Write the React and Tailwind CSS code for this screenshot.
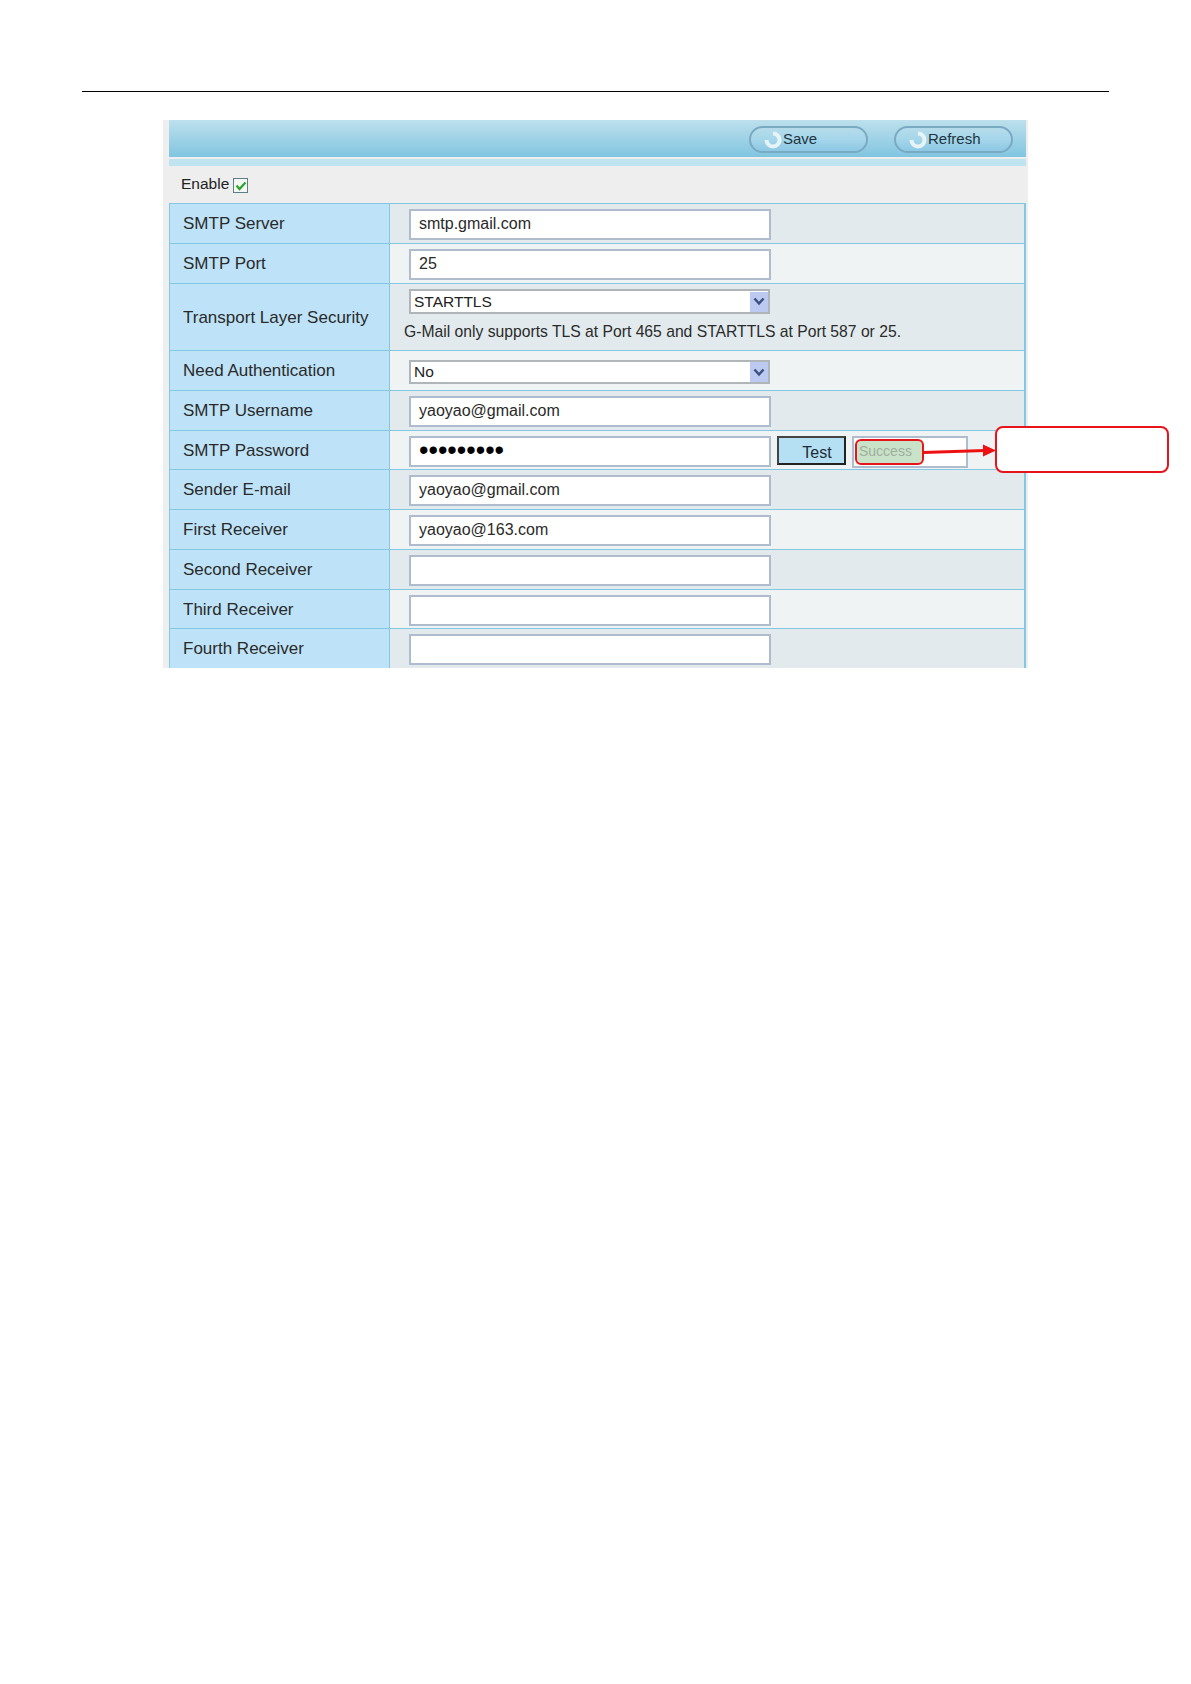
import React from "react";

const rows = [
  { label: "SMTP Server", value: "smtp.gmail.com" },
  { label: "SMTP Port", value: "25" },
  { label: "Transport Layer Security", kind: "tls" },
  { label: "Need Authentication", kind: "select", value: "No" },
  { label: "SMTP Username", value: "yaoyao@gmail.com" },
  { label: "SMTP Password", kind: "password" },
  { label: "Sender E-mail", value: "yaoyao@gmail.com" },
  { label: "First Receiver", value: "yaoyao@163.com" },
  { label: "Second Receiver", value: "" },
  { label: "Third Receiver", value: "" },
  { label: "Fourth Receiver", value: "" },
];

const rowHeights = ["h-[40px]", "h-[40px]", "h-[67px]", "h-[40px]", "h-[40px]", "h-[39px]", "h-[40px]", "h-[40px]", "h-[40px]", "h-[39px]", "h-[40px]"];

const TextBox = ({ value, type = "text", className = "text-[16px] pb-[2px] text-[#2a2a2a]" }) => (
  <input
    type={type}
    readOnly
    value={value}
    className={`w-[362px] h-[31px] shrink-0 px-[8px] bg-white border-2 border-[#aebccd] outline-none ${className}`}
  />
);

const Select = ({ value, className }) => (
  <div className={`w-[361px] flex items-center justify-between pl-[3px] bg-white border-2 border-[#b0b5ba] text-[15.5px] text-[#222] ${className}`}>
    <span>{value}</span>
    <span className="w-[18px] h-[20px] flex items-center justify-center bg-[#bcc9f0]">
      <svg width="12" height="9" viewBox="0 0 12 9">
        <path d="M1.5 1.5 L6 6.5 L10.5 1.5" fill="none" stroke="#3d4f80" strokeWidth="2.5" />
      </svg>
    </span>
  </div>
);

const PillButton = ({ label }) => (
  <button className="w-[119px] h-[27px] flex items-center pl-[13px] gap-[1px] rounded-full border-2 border-[#7aa9c2] bg-gradient-to-b from-[#b6dcea] via-[#a5d6ea] to-[#8cc8e4] text-[15px] text-[#20343f]">
    <svg width="18" height="20" viewBox="0 0 18 20" className="shrink-0">
      <path d="M9 3.5 A6.5 6.5 0 1 1 2.5 10" fill="none" stroke="#e6f4f8" strokeWidth="4" />
    </svg>
    {label}
  </button>
);

const App = () => {
  return (
    <div className="relative min-h-[1684px] bg-white pt-[91px] font-['Liberation_Sans',Arial,sans-serif]">
      {/* top rule */}
      <div className="mx-[82px] h-[1px] bg-black"></div>

      {/* settings panel, cut off at the bottom like the screenshot */}
      <div className="ml-[163px] mt-[28px] w-[865px] h-[548px] pl-[6px] pr-[2px] bg-[#eeeeee] overflow-hidden">
        <div className="h-[37px] pt-[2px] flex items-center justify-end gap-[26px] pr-[13px] bg-gradient-to-b from-[#bde0ec] to-[#80c5e1]">
          <PillButton label="Save" />
          <PillButton label="Refresh" />
        </div>
        <div className="h-[7px] mt-[2px] bg-[#bfe3ef]"></div>

        <div className="h-[37px] flex items-center gap-[4px] pl-[12px] text-[15.5px] text-[#222]">
          <span className="-mt-[2px]">Enable</span>
          <span className="w-[15px] h-[15px] mt-[2px] flex items-center justify-center bg-[#f4f7f4] border border-[#5c7f86]">
            <svg width="12" height="10" viewBox="0 0 12 10">
              <path d="M1.5 4.5 L4.5 8 L10.5 1.5" fill="none" stroke="#2aa52a" strokeWidth="2.2" />
            </svg>
          </span>
        </div>

        <div className="border-t border-l border-r-2 border-[#83c8e3]">
          {rows.map((row, i) => (
            <div
              key={row.label}
              className={`flex border-b border-[#83c8e3] ${rowHeights[i]} ${i % 2 === 0 ? "bg-[#e2eaed]" : "bg-[#f0f3f3]"}`}
            >
              <div className="w-[220px] shrink-0 flex items-center pl-[13px] pt-[1px] bg-[#bee3f8] border-r border-[#83c8e3] text-[17px] text-[#2a2a2a]">
                {row.label}
              </div>

              {row.kind === "tls" ? (
                <div className="flex flex-col pt-[5px] pl-[14px]">
                  <Select value="STARTTLS" className="ml-[5px] h-[25px]" />
                  <p className="mt-[6px] text-[15.7px] text-[#2a2a2a]">
                    G-Mail only supports TLS at Port 465 and STARTTLS at Port 587 or 25.
                  </p>
                </div>
              ) : row.kind === "select" ? (
                <div className="flex pt-[9px] pl-[19px]">
                  <Select value="No" className="h-[24px]" />
                </div>
              ) : row.kind === "password" ? (
                <div className="flex items-start gap-[6px] pt-[5px] pl-[19px]">
                  <TextBox value="123456789" type="password" className="text-[27px] text-black pb-[3px]" />
                  <button className="w-[69px] h-[29px] pl-[11px] pt-[3px] bg-[#b5dff2] border-2 border-t-[#444] border-l-[#444] border-r-[#222] border-b-[#222] text-[16px] text-[#1c2c36]">
                    Test
                  </button>
                  <div className="w-[116px] h-[32px] pt-[1px] pl-[1px] bg-white border-2 border-[#aebccd]">
                    <div className="w-[69px] h-[26px] flex items-center pl-[2px] pb-[2px] bg-[#c9e3c8] border-2 border-[#e8141c] rounded-[6px] text-[14px] text-[#a0aea0]">
                      Success
                    </div>
                  </div>
                </div>
              ) : (
                <div className="flex pt-[5px] pl-[19px]">
                  <TextBox value={row.value} />
                </div>
              )}
            </div>
          ))}
        </div>
      </div>

      {/* red callout over the panel edge */}
      <svg className="absolute left-[923px] top-[441px]" width="74" height="20" viewBox="0 0 74 20">
        <path d="M0 11.5 L62 9.5" stroke="#ee1111" strokeWidth="3" fill="none" />
        <path d="M60 3.5 L73 9.5 L60 15.5 Z" fill="#ee1111" />
      </svg>
      <div className="absolute left-[995px] top-[426px] w-[174px] h-[47px] bg-white border-2 border-[#e8141c] rounded-[8px]"></div>
    </div>
  );
};

export default App;
